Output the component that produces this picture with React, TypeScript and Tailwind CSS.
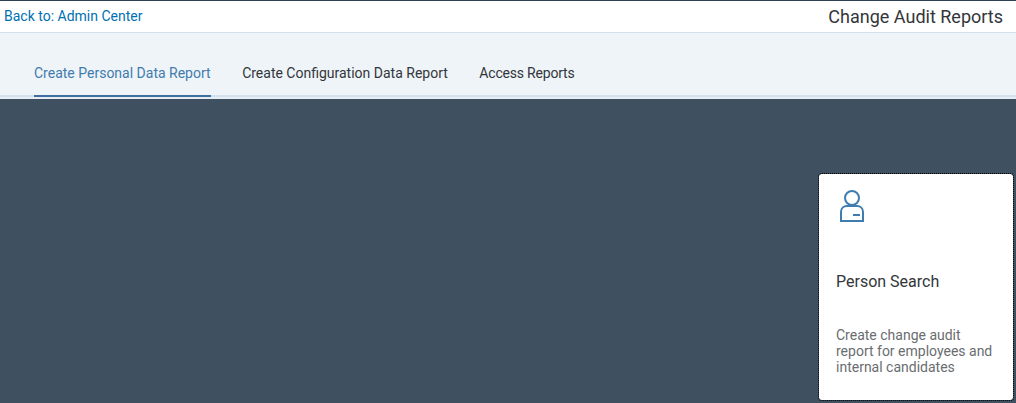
const font = "font-['Roboto',sans-serif]";

function PersonIcon() {
  return (
    <svg width="24" height="32" viewBox="0 0 24 32" fill="none" stroke="#3f7cb0" strokeWidth="2">
      <circle cx="12" cy="8" r="7" />
      <path d="M7 16H17C20.5 16 23 18.5 23 22V31H1V22C1 18.5 3.5 16 7 16Z" />
      <path d="M13 25H20" />
    </svg>
  );
}

const tabs = ['Create Personal Data Report', 'Create Configuration Data Report', 'Access Reports'];

export default function App() {
  return (
    <div className={`${font} w-[1016px] h-[403px] overflow-hidden flex flex-col bg-[#3f5061]`}>
      <header className="h-[33px] shrink-0 bg-white border-t border-t-[#2f4254] border-b border-b-[#cfe0ef] flex items-center justify-between pl-[4px] pr-[13px]">
        <a className="text-[14px] text-[#0070b1]">Back to: Admin Center</a>
        <h1 className="text-[18px] text-[#32363a]">Change Audit Reports</h1>
      </header>
      <nav className="h-[64px] shrink-0 bg-[#eff4f9] border-b-2 border-b-[#d3e0ed] flex items-end gap-[31.5px] pl-[34px]">
        {tabs.map((tab, i) => (
          <div
            key={tab}
            className={
              i === 0
                ? 'h-[34px] -mb-[2px] text-[14px] text-[#427cac] border-b-2 border-b-[#3f6f9c] whitespace-nowrap'
                : i === 2
                  ? 'h-[34px] -mb-[2px] text-[14px] text-[#32363a] tracking-[-0.2px] whitespace-nowrap'
                  : 'h-[34px] -mb-[2px] text-[14px] text-[#32363a] whitespace-nowrap'
            }
          >
            {tab}
          </div>
        ))}
      </nav>
      <div className="h-[2px] shrink-0 bg-[#e6edf4]" />
      <main className="flex-1 flex justify-end items-start pt-[75px] pr-[3px]">
        <section className="w-[194px] h-[226px] bg-white rounded-[3px] outline-1 outline-dotted outline-black pl-[17px] pr-[12px] pt-[16px] flex flex-col">
          <div className="pl-[4px]">
            <PersonIcon />
          </div>
          <h2 className="mt-[50px] text-[16px] leading-[20px] text-[#32363a]">Person Search</h2>
          <p className="mt-[35px] text-[14px] leading-[16px] text-[#6a6d70]">
            Create change audit
            <br />
            report for employees and
            <br />
            internal candidates
          </p>
        </section>
      </main>
    </div>
  );
}
